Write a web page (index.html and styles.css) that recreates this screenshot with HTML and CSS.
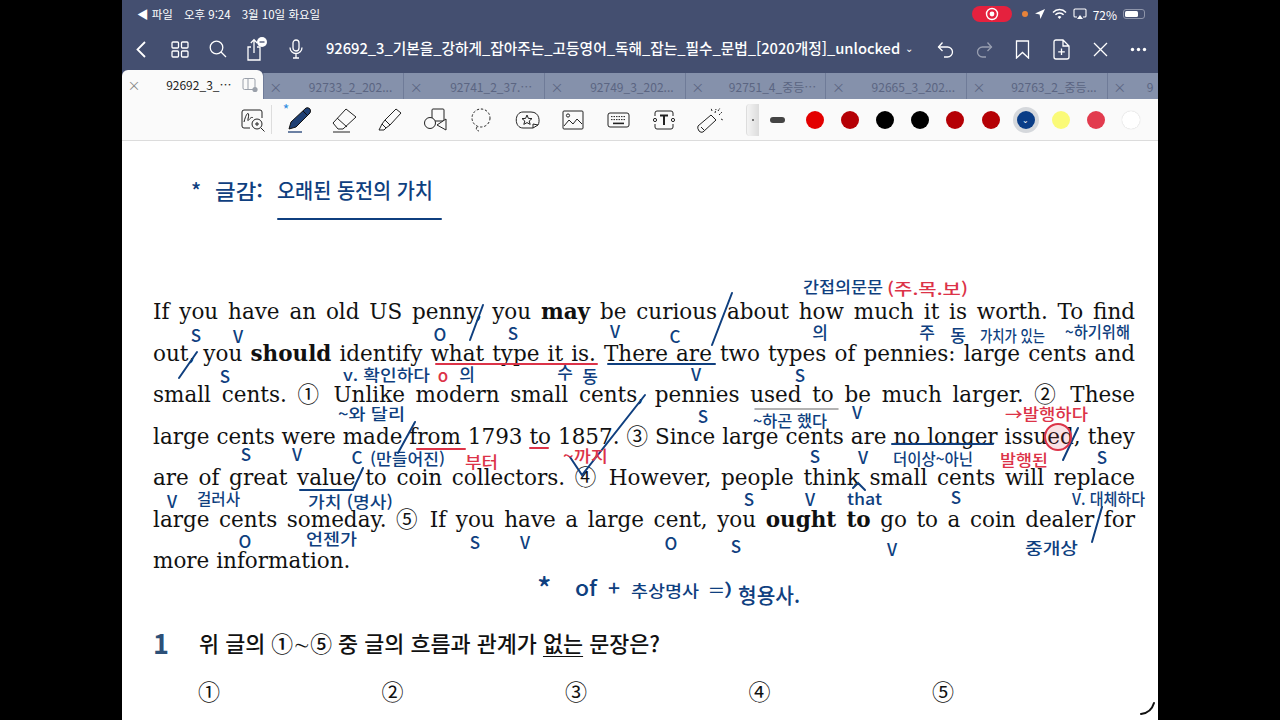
FILE: index.html
```html
<!DOCTYPE html>
<html lang="ko">
<head>
    <meta charset="UTF-8">
    <title>92692_3 PDF note</title>
    <link rel="stylesheet" href="styles.css">
</head>
<body>
<div class="ipad">
    <header class="top">
        <div class="status">
            <div class="status-left">
                <span>◀ 파일</span>
                <span>오후 9:24</span>
                <span>3월 10일 화요일</span>
            </div>
            <div class="status-right">
                <span class="rec"><svg width="14" height="14" viewBox="0 0 14 14"><circle cx="7" cy="7" r="5.5" fill="none" stroke="#fff" stroke-width="1.4"/><circle cx="7" cy="7" r="2.4" fill="#fff"/></svg></span>
                <span class="orange-dot"></span>
                <svg width="12" height="12" viewBox="0 0 12 12"><path d="M11 1 L1 5.6 L5.6 6.4 L6.4 11 Z" fill="#fff"/></svg>
                <svg width="15" height="12" viewBox="0 0 15 12" fill="none" stroke="#fff" stroke-width="1.5"><path d="M1 4.4 A9 9 0 0 1 14 4.4"/><path d="M3.4 6.8 A5.6 5.6 0 0 1 11.6 6.8"/><path d="M7.5 11 L5.6 8.9 A2.7 2.7 0 0 1 9.4 8.9 Z" fill="#fff" stroke="none"/></svg>
                <svg width="14" height="12" viewBox="0 0 14 12" fill="none" stroke="#fff" stroke-width="1.1"><path d="M4 9 H2 Q1 9 1 8 V2 Q1 1 2 1 H12 Q13 1 13 2 V8 Q13 9 12 9 H10"/><path d="M7 7 L10 11 H4 Z" fill="#fff" stroke="none"/></svg>
                <span class="pct">72%</span>
                <span class="battery"><span class="battery-fill"></span></span>
            </div>
        </div>

        <div class="nav">
            <div class="slot"><svg width="10" height="17" viewBox="0 0 10 17" class="line-ic"><path d="M9 1 L1.5 8.5 L9 16"/></svg></div>
            <div class="slot"><svg width="18" height="17" viewBox="0 0 18 17" class="line-ic thin"><rect x="1" y="1" width="6.5" height="6" rx="1"/><rect x="10.5" y="1" width="6.5" height="6" rx="1"/><rect x="1" y="10" width="6.5" height="6" rx="1"/><rect x="10.5" y="10" width="6.5" height="6" rx="1"/></svg></div>
            <div class="slot"><svg width="18" height="18" viewBox="0 0 18 18" class="line-ic thin"><circle cx="7.5" cy="7.5" r="6.3"/><path d="M12 12 L17 17"/></svg></div>
            <div class="slot"><svg width="24" height="26" viewBox="0 0 24 26" class="line-ic thin"><path d="M6 11 H3 V24 H15 V11 H12"/><path d="M9 17 V4 M5.8 7 L9 3.6 L12.2 7"/><circle cx="17" cy="6" r="5" fill="#fff" stroke="none"/><path d="M14.5 6 H19.5" stroke="#444f70"/></svg></div>
            <div class="slot"><svg width="14" height="20" viewBox="0 0 14 20" class="line-ic thin"><rect x="4" y="1" width="6" height="11" rx="3"/><path d="M1 8.5 A6 6 0 0 0 13 8.5 M7 15 V19 M4 19 H10"/></svg></div>
            <div class="doc-title">92692_3_기본을_강하게_잡아주는_고등영어_독해_잡는_필수_문법_[2020개정]_unlocked<span class="caret">⌄</span></div>
            <div class="nav-right">
                <div class="slot"><svg width="17" height="17" viewBox="0 0 17 17" class="line-ic thin"><path d="M5.5 1.5 L1.5 6 L5.5 10"/><path d="M1.5 6 H10.5 A5 5 0 0 1 10.5 16 H7"/></svg></div>
                <div class="slot dim"><svg width="17" height="17" viewBox="0 0 17 17" class="line-ic thin"><path d="M11.5 1.5 L15.5 6 L11.5 10"/><path d="M15.5 6 H6.5 A5 5 0 0 0 6.5 16 H10"/></svg></div>
                <div class="slot"><svg width="15" height="19" viewBox="0 0 15 19" class="line-ic thin"><path d="M1.5 1 H13.5 V18 L7.5 12.5 L1.5 18 Z"/></svg></div>
                <div class="slot"><svg width="17" height="21" viewBox="0 0 17 21" class="line-ic thin"><path d="M10 1 H3 Q1 1 1 3 V18 Q1 20 3 20 H14 Q16 20 16 18 V7 Z M10 1 V7 H16"/><path d="M8.5 9.5 V16 M5.2 12.8 H11.8"/></svg></div>
                <div class="slot"><svg width="15" height="15" viewBox="0 0 15 15" class="line-ic thin"><path d="M1 1 L14 14 M14 1 L1 14"/></svg></div>
                <div class="slot"><svg width="17" height="5" viewBox="0 0 17 5" fill="#fff"><circle cx="2.5" cy="2.5" r="1.7"/><circle cx="8.5" cy="2.5" r="1.7"/><circle cx="14.5" cy="2.5" r="1.7"/></svg></div>
            </div>
        </div>

        <div class="tabs">
            <div class="tab active">
                <span class="tab-x">×</span><span class="tab-name">92692_3_⋯</span>
                <svg class="split" width="16" height="16" viewBox="0 0 16 16" fill="none" stroke="#9aa0aa"><rect x="1" y="1.5" width="12" height="11" rx="1.5"/><path d="M6 1.5 V12.5"/><circle cx="13" cy="12.5" r="2.6" fill="#9aa0aa" stroke="none"/></svg>
            </div>
            <div class="tab"><span class="tab-x">×</span><span class="tab-name">92733_2_202...</span></div>
            <div class="tab"><span class="tab-x">×</span><span class="tab-name">92741_2_37.⋯</span></div>
            <div class="tab"><span class="tab-x">×</span><span class="tab-name">92749_3_202...</span></div>
            <div class="tab"><span class="tab-x">×</span><span class="tab-name">92751_4_중등⋯</span></div>
            <div class="tab"><span class="tab-x">×</span><span class="tab-name">92665_3_202...</span></div>
            <div class="tab"><span class="tab-x">×</span><span class="tab-name">92763_2_중등...</span></div>
            <div class="tab tab-cut"><span class="tab-x">×</span><span class="tab-name">9</span></div>
        </div>
    </header>

    <div class="tools">
        <div class="tool sep-right"><svg width="26" height="26" viewBox="0 0 26 26" class="tool-ic"><path d="M10 21 H4 Q2 21 2 19 V5 Q2 3 4 3 H20 Q22 3 22 5 V11"/><path d="M4 15 C7 3 10 5 8 12 C7 17 11 8 13 11"/><circle cx="17" cy="17" r="5" fill="#fafafa"/><path d="M21 21 L24.5 24.5 M17 15 V19 M15 17 H19"/></svg></div>
        <div class="tool tool-pen"><span class="bt">*</span><svg width="28" height="28" viewBox="0 0 28 28"><path d="M4 23 L6 16 L21 2 Q23 1 25 3 Q26 5 25 7 L11 21 Z" fill="#1e3f74" stroke="#111" stroke-width="1"/><path d="M18 5 L23 10" stroke="#111"/><path d="M3 26 H17" stroke="#1e3f74" stroke-width="1.3"/></svg></div>
        <div class="tool"><svg width="28" height="28" viewBox="0 0 28 28" class="tool-ic"><path d="M3 17 L16 3 L26 11 L13 23 L8 23 Z"/><path d="M7 12 L17 21"/><path d="M3 26 H20"/></svg></div>
        <div class="tool"><svg width="26" height="26" viewBox="0 0 26 26" class="tool-ic"><path d="M8 13 L19 2 L24 6 L13 18 Z"/><path d="M8 13 L5 17 L9 21 L13 18"/><path d="M5 17 L2 23 L7 23 L9 21"/></svg></div>
        <div class="tool"><svg width="26" height="26" viewBox="0 0 26 26" class="tool-ic"><rect x="9" y="2" width="12" height="12" rx="1"/><circle cx="7" cy="16" r="5.5" fill="#fafafa"/><path d="M23 12 V23 L14 18 Z" fill="#fafafa"/></svg></div>
        <div class="tool"><svg width="24" height="24" viewBox="0 0 24 24" class="tool-ic" stroke-dasharray="2.4 1.8"><circle cx="12" cy="10" r="9"/><path d="M8 19 Q6 22 10 23"/></svg></div>
        <div class="tool"><svg width="28" height="24" viewBox="0 0 28 24" class="tool-ic"><path d="M20 20 H10 C1 20 1 4 10 4 H18 C27 4 27 14 25 17 Z"/><path d="M20 20 L20 16 L25 17"/><path d="M14 7 L15.4 10.4 L19 10.6 L16.2 13 L17.2 16.4 L14 14.6 L10.8 16.4 L11.8 13 L9 10.6 L12.6 10.4 Z"/></svg></div>
        <div class="tool"><svg width="22" height="20" viewBox="0 0 22 20" class="tool-ic"><rect x="1" y="1" width="20" height="18" rx="1"/><circle cx="6" cy="5.5" r="1.6"/><path d="M2 16 L7 10 L11 14 L15 9 L20 14"/></svg></div>
        <div class="tool"><svg width="23" height="16" viewBox="0 0 23 16" class="tool-ic"><rect x="1" y="1" width="21" height="14" rx="2"/><path d="M4 4.6 H19 M4 7.6 H19" stroke-dasharray="1.5 1"/><path d="M6 11.4 H17" stroke-width="1.6"/></svg></div>
        <div class="tool"><svg width="24" height="20" viewBox="0 0 24 20" class="tool-ic"><path d="M3 6 V3 Q3 1 5 1 H19 Q21 1 21 3 V6 M3 14 V17 Q3 19 5 19 H19 Q21 19 21 17 V14"/><circle cx="3" cy="10" r="1.6"/><circle cx="21" cy="10" r="1.6"/><path d="M8 5.5 H16 M12 5.5 V15" stroke-width="2"/></svg></div>
        <div class="tool"><svg width="28" height="28" viewBox="0 0 28 28" class="tool-ic"><path d="M2 20 L15 9 L20 14 L7 26 Q5 27 3 25 Q1 22 2 20 Z"/><path d="M5 21 L8 24"/><path d="M19 7 L20 3 M23 9 L26 6 M25 13 L27 14 M16 5 L15 2 M22 5 L24 2" stroke-dasharray="2 1"/></svg></div>
        <div class="handle"><span></span></div>
        <div class="dash"></div>
        <div class="swatch"><i class="red1"></i></div>
        <div class="swatch"><i class="red2"></i></div>
        <div class="swatch"><i class="black"></i></div>
        <div class="swatch"><i class="black"></i></div>
        <div class="swatch"><i class="red2"></i></div>
        <div class="swatch"><i class="red2"></i></div>
        <div class="swatch"><i class="navy selected">⌄</i></div>
        <div class="swatch"><i class="yellow"></i></div>
        <div class="swatch"><i class="pink"></i></div>
        <div class="swatch"><i class="white"></i></div>
    </div>

    <main class="page">
        <div class="passage">
            <div class="line">If you have an old US penny, you <b>may</b> be curious about how much it is worth. To find</div>
            <div class="line">out, you <b>should</b> identify what type it is. There are two types of pennies: large cents and</div>
            <div class="line">small cents. ① Unlike modern small cents, pennies used to be much larger. ② These</div>
            <div class="line">large cents were made from 1793 to 1857. ③ Since large cents are no longer issued, they</div>
            <div class="line">are of great value to coin collectors. ④ However, people think small cents will replace</div>
            <div class="line">large cents someday. ⑤ If you have a large cent, you <b>ought to</b> go to a coin dealer for</div>
            <div class="line end">more information.</div>
        </div>

        <div class="question">
            <span class="q-num">1</span>
            <span class="q-text">위 글의 ①∼⑤ 중 글의 흐름과 관계가 <u>없는</u> 문장은?</span>
        </div>
        <div class="choices">
            <span>①</span><span>②</span><span>③</span><span>④</span><span>⑤</span>
        </div>
    </main>

    <!-- pen notes, coordinates are screen pixels -->
    <svg class="ink" viewBox="122 0 1036 720" width="1036" height="720">
        <g class="pen blue">
            <path d="M278 219 H441"/>
            <path d="M483 305 L470 340"/>
            <path d="M197 352 L179 378"/>
            <path d="M732 293 L712 345"/>
            <path d="M608 364 H715"/>
            <path d="M415 422 L398 453"/>
            <path d="M645 395 L582 475 L570 457"/>
            <path d="M300 490 H353 L363 468"/>
            <path d="M892 444 H993"/>
            <path d="M1078 428 L1063 460"/>
            <path d="M853 488 L858 483 L865 490"/>
            <path d="M1102 507 L1092 542"/>
        </g>
        <g class="pen red">
            <path d="M436 364 H597"/>
            <path d="M417 449 H465"/>
            <path d="M530 448 H548"/>
            <circle class="ed" cx="1058" cy="437" r="13"/>
        </g>
        <path class="pen grey" d="M755 409 H838"/>
        <path class="pen black" d="M1141 714 Q1151 713 1154 703"/>

        <g class="note blue">
            <text x="191" y="199" class="big">*</text>
            <text x="215" y="199" class="big" textLength="48" lengthAdjust="spacingAndGlyphs">글감:</text>
            <text x="277" y="198" class="big" textLength="156" lengthAdjust="spacingAndGlyphs">오래된 동전의 가치</text>
            <text x="196" y="342" class="mid">S</text>
            <text x="238" y="343" class="mid">V</text>
            <text x="440" y="341" class="mid">O</text>
            <text x="513" y="340" class="mid">S</text>
            <text x="615" y="338" class="mid">V</text>
            <text x="675" y="343" class="mid">C</text>
            <text x="820" y="339" class="mid">의</text>
            <text x="927" y="339" class="mid">주</text>
            <text x="958" y="342" class="mid">동</text>
            <text x="980" y="342" textLength="65" lengthAdjust="spacingAndGlyphs">가치가 있는</text>
            <text x="1065" y="338" textLength="65" lengthAdjust="spacingAndGlyphs">~하기위해</text>
            <text x="803" y="293" textLength="80" lengthAdjust="spacingAndGlyphs">간접의문문</text>
            <text x="225" y="383" class="mid">S</text>
            <text x="343" y="381" textLength="87" lengthAdjust="spacingAndGlyphs">v. 확인하다</text>
            <text x="467" y="381" class="mid">의</text>
            <text x="565" y="379" class="mid">수</text>
            <text x="590" y="383" class="mid">동</text>
            <text x="696" y="381" class="mid">V</text>
            <text x="800" y="382" class="mid">S</text>
            <text x="703" y="423" class="mid">S</text>
            <text x="857" y="419" class="mid">V</text>
            <text x="753" y="427" textLength="74" lengthAdjust="spacingAndGlyphs">~하곤 했다</text>
            <text x="338" y="420" textLength="67" lengthAdjust="spacingAndGlyphs">~와 달리</text>
            <text x="246" y="461" class="mid">S</text>
            <text x="297" y="461" class="mid">V</text>
            <text x="357" y="464" class="mid">C</text>
            <text x="370" y="465" textLength="75" lengthAdjust="spacingAndGlyphs">(만들어진)</text>
            <text x="815" y="463" class="mid">S</text>
            <text x="863" y="464" class="mid">V</text>
            <text x="893" y="465" textLength="80" lengthAdjust="spacingAndGlyphs">더이상~아닌</text>
            <text x="1102" y="464" class="mid">S</text>
            <text x="172" y="508" class="mid">V</text>
            <text x="197" y="505" textLength="43" lengthAdjust="spacingAndGlyphs">걸러사</text>
            <text x="308" y="508" textLength="85" lengthAdjust="spacingAndGlyphs">가치 (명사)</text>
            <text x="749" y="506" class="mid">S</text>
            <text x="810" y="506" class="mid">V</text>
            <text x="847" y="505" textLength="35" lengthAdjust="spacingAndGlyphs">that</text>
            <text x="956" y="504" class="mid">S</text>
            <text x="1072" y="505" textLength="73" lengthAdjust="spacingAndGlyphs">V. 대체하다</text>
            <text x="245" y="548" class="mid">O</text>
            <text x="306" y="545" textLength="51" lengthAdjust="spacingAndGlyphs">언젠가</text>
            <text x="475" y="549" class="mid">S</text>
            <text x="525" y="549" class="mid">V</text>
            <text x="671" y="550" class="mid">O</text>
            <text x="736" y="553" class="mid">S</text>
            <text x="892" y="556" class="mid">V</text>
            <text x="1025" y="554" textLength="53" lengthAdjust="spacingAndGlyphs">중개상</text>
            <text x="537" y="600" class="star">*</text>
            <text x="575" y="596" class="big" textLength="22" lengthAdjust="spacingAndGlyphs">of</text>
            <text x="608" y="596" class="big">+</text>
            <text x="631" y="597" textLength="68" lengthAdjust="spacingAndGlyphs">추상명사</text>
            <text x="709" y="596" textLength="24" lengthAdjust="spacingAndGlyphs">=)</text>
            <text x="738" y="603" class="big" textLength="62" lengthAdjust="spacingAndGlyphs">형용사.</text>
        </g>
        <g class="note red">
            <text x="887" y="295" textLength="81" lengthAdjust="spacingAndGlyphs">(주.목.보)</text>
            <text x="443" y="382" class="mid">o</text>
            <text x="465" y="468" textLength="33" lengthAdjust="spacingAndGlyphs">부터</text>
            <text x="563" y="462" textLength="45" lengthAdjust="spacingAndGlyphs">~까지</text>
            <text x="1005" y="420" textLength="83" lengthAdjust="spacingAndGlyphs">→발행하다</text>
            <text x="1000" y="466" textLength="48" lengthAdjust="spacingAndGlyphs">발행된</text>
        </g>
    </svg>
</div>
</body>
</html>
```

FILE: styles.css
```css
html, body {
    margin: 0;
    height: 100%;
}
body {
    background: #000;
    display: flex;
    justify-content: center;
    overflow: hidden;
    font-family: "Noto Sans CJK KR", "Noto Sans", sans-serif;
}
.ipad {
    position: relative;
    width: 1036px;
    height: 720px;
    display: flex;
    flex-direction: column;
    background: #fff;
    overflow: hidden;
}

/* top bars */
.top {
    background: #444f70;
    color: #fff;
}
.status {
    height: 28px;
    padding: 0 13px 0 15px;
    display: flex;
    align-items: center;
    justify-content: space-between;
    font-size: 11.5px;
}
.status-left {
    display: flex;
    gap: 11px;
}
.status-right {
    display: flex;
    align-items: center;
    gap: 6px;
}
.rec {
    width: 40px;
    height: 16px;
    border-radius: 8px;
    background: #e5213e;
    display: flex;
    align-items: center;
    justify-content: center;
    margin-right: 4px;
}
.orange-dot {
    width: 6px;
    height: 6px;
    border-radius: 50%;
    background: #e8833a;
}
.pct {
    font-size: 12px;
}
.battery {
    width: 22px;
    height: 10px;
    padding: 1px;
    border: 1px solid #8e95aa;
    border-radius: 3px;
    display: block;
    box-sizing: border-box;
}
.battery-fill {
    display: block;
    width: 72%;
    height: 100%;
    background: #fff;
    border-radius: 1.5px;
}
.nav {
    height: 42px;
    display: flex;
    align-items: center;
}
.slot {
    width: 38.6px;
    height: 100%;
    flex: none;
    display: flex;
    align-items: center;
    justify-content: center;
}
.dim {
    opacity: .45;
}
.nav-right {
    margin-left: auto;
    height: 100%;
    display: flex;
}
.line-ic {
    fill: none;
    stroke: #fff;
    stroke-width: 1.8;
}
.thin {
    stroke-width: 1.3;
}
.doc-title {
    margin-left: 11px;
    font-size: 14.7px;
    font-weight: 500;
    line-height: 40px;
    white-space: nowrap;
}
.caret {
    margin-left: 5px;
    font-size: 10px;
    position: relative;
    top: -2px;
}

/* tabs */
.tabs {
    height: 29px;
    display: flex;
    align-items: flex-end;
    background: #444f70;
}
.tab {
    width: 140.7px;
    height: 26px;
    flex: none;
    box-sizing: border-box;
    display: flex;
    align-items: center;
    padding-left: 5px;
    background: #8591ab;
    border-left: 1px solid #6f7b98;
    color: #5b6582;
    font-size: 12px;
}
.tab.active {
    height: 29px;
    background: #fafafa;
    border-left: 0;
    border-radius: 6px 6px 0 0;
    color: #222;
}
.tab.active .tab-x {
    color: #888;
}
.tab-cut {
    width: 60px;
}
.tab-x {
    width: 14px;
    flex: none;
    font-size: 13px;
    text-align: center;
}
.tab-name {
    flex: 1;
    text-align: center;
    padding-left: 15px;
    white-space: nowrap;
}
.split {
    margin-right: 5px;
    flex: none;
}
.tab-cut .tab-name {
    text-align: left;
    padding-left: 20px;
}

/* pen toolbar */
.tools {
    height: 42px;
    box-sizing: border-box;
    flex: none;
    padding-left: 108px;
    display: flex;
    align-items: center;
    background: #fafafa;
    border-bottom: 1px solid #dcdcdc;
}
.tool {
    position: relative;
    width: 45.7px;
    height: 100%;
    flex: none;
    display: flex;
    align-items: center;
    justify-content: center;
}
.sep-right::after {
    content: "";
    position: absolute;
    right: 4px;
    top: 6px;
    bottom: 6px;
    width: 1px;
    background: #ddd;
}
.tool-ic {
    fill: none;
    stroke: #222;
    stroke-width: 1;
}
.bt {
    position: absolute;
    left: 7px;
    top: 2px;
    font-size: 14px;
    line-height: 16px;
    color: #2d8ce0;
}
.handle {
    width: 12px;
    height: 32px;
    margin-left: 13px;
    background: linear-gradient(to right, #f4f4f4, #dcdcdc);
    border-radius: 4px 0 0 4px;
    border-left: 1px solid #ddd;
    display: flex;
    align-items: center;
    justify-content: center;
}
.handle span {
    width: 2px;
    height: 2px;
    background: #777;
}
.dash {
    width: 15px;
    height: 6px;
    margin: 0 13px 0 11px;
    border-radius: 3px;
    background: #444;
}
.swatch {
    width: 35.1px;
    flex: none;
    display: flex;
    justify-content: center;
}
.swatch i {
    width: 18px;
    height: 18px;
    border-radius: 50%;
    display: flex;
    align-items: center;
    justify-content: center;
    font-style: normal;
    font-size: 8px;
    color: #fff;
}
.red1 { background: #e30000; }
.red2 { background: #b50005; }
.black { background: #000; }
.navy { background: #0a3d87; }
.yellow { background: #fafa78; }
.pink { background: #e23b4e; }
.white { background: #fff; box-shadow: 0 0 1px #bbb; }
.selected {
    box-shadow: 0 0 0 4px #d5d8dc;
}

/* page */
.page {
    flex: 1;
    padding: 150px 23px 0 31px;
    background: #fff;
    color: #111;
}
.line {
    height: 41.5px;
    line-height: 41.5px;
    font-family: "DejaVu Serif", "Noto Sans CJK KR", serif;
    font-size: 21.5px;
    text-align: justify;
    text-align-last: justify;
    white-space: nowrap;
}
.line.end {
    text-align-last: left;
}
.question {
    margin-top: 43px;
    height: 36px;
    display: flex;
    align-items: center;
    color: #111;
}
.q-num {
    width: 46px;
    font-size: 27px;
    font-weight: 700;
    color: #2c5078;
}
.q-text {
    font-size: 21.8px;
    font-weight: 500;
}
.q-text u {
    text-underline-offset: 4px;
    text-decoration-thickness: 1px;
}
.choices {
    margin-top: 13px;
    padding-left: 45px;
    display: flex;
    font-family: "Noto Sans CJK KR", serif;
    font-size: 22px;
}
.choices span {
    width: 183.5px;
    flex: none;
}

/* pen notes over the page */
.ink {
    position: absolute;
    left: 0;
    top: 0;
    pointer-events: none;
}
.pen {
    fill: none;
    stroke-width: 2;
    stroke-linecap: round;
}
.pen.blue, .pen .blue { stroke: #0f3f7f; }
.pen.red { stroke: #dc3348; }
.pen.grey { stroke: #999; stroke-width: 1.5; }
.pen.black { stroke: #111; }
.ed {
    fill: rgba(220, 51, 72, .14);
}
.note {
    font-size: 16px;
    font-weight: 500;
    font-family: "Noto Sans CJK KR", sans-serif;
}
.note.blue { fill: #0f3f7f; }
.note.red { fill: #dc3348; }
.note .mid { text-anchor: middle; font-size: 17px; }
.note .big { font-size: 21px; }
.note .star { font-size: 30px; }
```
